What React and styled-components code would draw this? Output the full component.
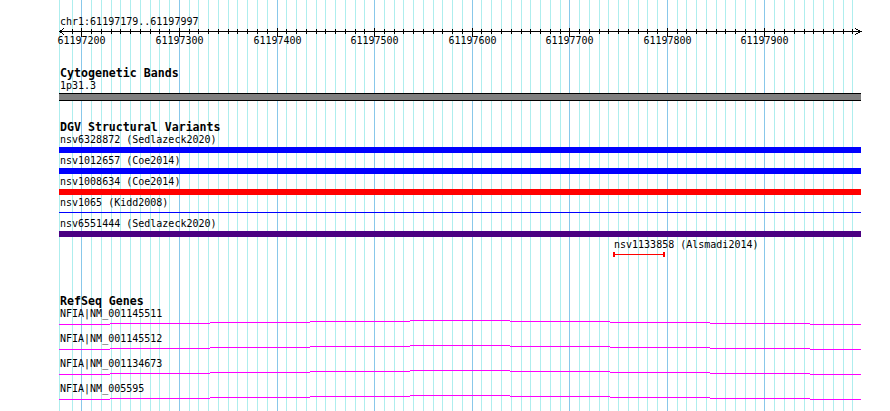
import React from 'react';
import styled, { createGlobalStyle } from 'styled-components';

const PANEL_WIDTH = 802;
const ORIGIN_BP = 61197200;
const ORIGIN_X = 22.3;
const PX_PER_BP = 0.976;

const toX = (bp) => ORIGIN_X + (bp - ORIGIN_BP) * PX_PER_BP;

const gridLines = [{ x: 0, major: false }];
for (let k = -1; k <= 79; k++) {
  gridLines.push({ x: Math.round(toX(ORIGIN_BP + k * 10)), major: k % 10 === 0, k });
}

const variants = [
  { name: 'nsv6328872 (Sedlazeck2020)', color: '#0000ff' },
  { name: 'nsv1012657 (Coe2014)', color: '#0000ff' },
  { name: 'nsv1008634 (Coe2014)', color: '#ff0000' },
  { name: 'nsv1065 (Kidd2008)', color: '#0000ff', thin: true },
  { name: 'nsv6551444 (Sedlazeck2020)', color: '#4b0082' },
];

const smallVariant = { name: 'nsv1133858 (Alsmadi2014)', start: 61197746, end: 61197799 };
const markerWidth = Math.round((smallVariant.end - smallVariant.start) * PX_PER_BP);

const genes = ['NFIA|NM_001145511', 'NFIA|NM_001145512', 'NFIA|NM_001134673', 'NFIA|NM_005595'];

// intron drawn as a shallow hat, one pixel step per 100px
const intronSteps = [0, 51, 151, 251, 351, 451, 551, 651, 751, PANEL_WIDTH];
const intronLevels = [4, 3, 2, 1, 0, 1, 2, 3, 4];

export default function App() {
  return (
    <>
      <GlobalStyle />
      <Panel>
        <Grid width={PANEL_WIDTH} height='100%'>
          {gridLines.map((line, idx) => (
            <rect
              key={idx}
              x={line.x}
              y={0}
              width={1}
              height='100%'
              fill={line.major ? '#88c8ea' : '#aeeeee'}
            />
          ))}
        </Grid>

        <Ruler>
          <Label>chr1:61197179..61197997</Label>
          <Axis width={PANEL_WIDTH} height={18}>
            <rect x={0} y={3} width={PANEL_WIDTH} height={1} fill='#000' />
            <polyline points='5,0.5 0.5,3.5 5,6.5' fill='none' stroke='#000' strokeWidth={1} />
            <polyline
              points={`${PANEL_WIDTH - 6},0.5 ${PANEL_WIDTH - 0.5},3.5 ${PANEL_WIDTH - 6},6.5`}
              fill='none'
              stroke='#000'
              strokeWidth={1}
            />
            {gridLines
              .filter((l) => l.k !== undefined)
              .map((l) => (
                <rect key={l.k} x={l.x} y={l.major ? 0 : 1} width={1} height={l.major ? 9 : 5} fill='#000' />
              ))}
            {gridLines
              .filter((l) => l.major)
              .map((l) => (
                <text key={l.k} x={l.x + 0.5} y={16} textAnchor='middle'>
                  {ORIGIN_BP + l.k * 10}
                </text>
              ))}
          </Axis>
        </Ruler>

        <Track $gap={21}>
          <TrackTitle>Cytogenetic Bands</TrackTitle>
          <Label>1p31.3</Label>
          <Band />
        </Track>

        <Track $gap={20}>
          <TrackTitle>DGV Structural Variants</TrackTitle>
          {variants.map((item) => (
            <FeatureRow key={item.name}>
              <Label>{item.name}</Label>
              <BarSlot $thin={item.thin}>
                <Bar $color={item.color} $thin={item.thin} />
              </BarSlot>
            </FeatureRow>
          ))}
          <FeatureRow style={{ marginLeft: Math.round(toX(smallVariant.start)) - 1 }}>
            <Label>{smallVariant.name}</Label>
            <RangeMarker width={markerWidth} height={6}>
              <rect x={0} y={0} width={2} height={5} fill='#ff0000' />
              <rect x={0} y={2} width={markerWidth} height={1} fill='#ff0000' />
              <rect x={markerWidth - 2} y={0} width={2} height={5} fill='#ff0000' />
            </RangeMarker>
          </FeatureRow>
        </Track>

        <Track $gap={35}>
          <TrackTitle>RefSeq Genes</TrackTitle>
          {genes.map((gene) => (
            <GeneRow key={gene}>
              <Label>{gene}</Label>
              <Intron width={PANEL_WIDTH} height={5}>
                {intronLevels.map((level, idx) => (
                  <rect
                    key={idx}
                    x={intronSteps[idx]}
                    y={level}
                    width={intronSteps[idx + 1] - intronSteps[idx]}
                    height={1}
                    fill='#ff00ff'
                  />
                ))}
              </Intron>
            </GeneRow>
          ))}
        </Track>
      </Panel>
    </>
  );
}

const GlobalStyle = createGlobalStyle`
  html, body {
    margin: 0;
    padding: 0;
    background: #ffffff;
    overflow: hidden;
  }
  body {
    font-family: 'DejaVu Sans Mono', 'Liberation Mono', monospace;
    color: #000;
  }
`;

const Panel = styled.div`
  position: relative;
  margin-left: 59px;
  width: ${PANEL_WIDTH}px;
  min-height: 411px;
  padding-top: 16px;
  box-sizing: border-box;
`;

const Grid = styled.svg`
  position: absolute;
  left: 0;
  top: 0;
  height: 100%;
  shape-rendering: crispEdges;
  z-index: 0;
`;

const Ruler = styled.div`
  position: relative;
  z-index: 1;
  display: flex;
  flex-direction: column;
`;

const Axis = styled.svg`
  display: block;
  shape-rendering: crispEdges;
  overflow: visible;

  text {
    font-family: 'DejaVu Sans Mono', 'Liberation Mono', monospace;
    font-size: 10px;
    fill: #000;
  }
`;

const Label = styled.div`
  font-size: 10px;
  line-height: 12px;
  height: 12px;
  padding-left: 1px;
  white-space: nowrap;
`;

const Track = styled.section`
  position: relative;
  z-index: 1;
  display: flex;
  flex-direction: column;
  margin-top: ${({ $gap }) => $gap}px;
`;

const TrackTitle = styled.h3`
  margin: 0;
  padding-left: 1px;
  font-size: 11.6px;
  line-height: 13px;
  height: 13px;
  font-weight: bold;
  white-space: nowrap;
`;

const Band = styled.div`
  margin-top: 1px;
  height: 6px;
  background: #808080;
  border-top: 1px solid #000;
  border-bottom: 1px solid #000;
`;

const FeatureRow = styled.div`
  display: flex;
  flex-direction: column;
  align-items: flex-start;
  margin-bottom: 2px;
`;

const BarSlot = styled.div`
  margin-top: 1px;
  height: 6px;
  width: 100%;
  padding-top: ${({ $thin }) => ($thin ? 2 : 0)}px;
  box-sizing: border-box;
`;

const Bar = styled.div`
  width: 100%;
  height: ${({ $thin }) => ($thin ? 1 : 6)}px;
  background: ${({ $color }) => $color};
`;

const RangeMarker = styled.svg`
  display: block;
  margin-top: 1px;
  shape-rendering: crispEdges;
`;

const GeneRow = styled.div`
  display: flex;
  flex-direction: column;
  margin-bottom: 8px;
`;

const Intron = styled.svg`
  display: block;
  shape-rendering: crispEdges;
`;
